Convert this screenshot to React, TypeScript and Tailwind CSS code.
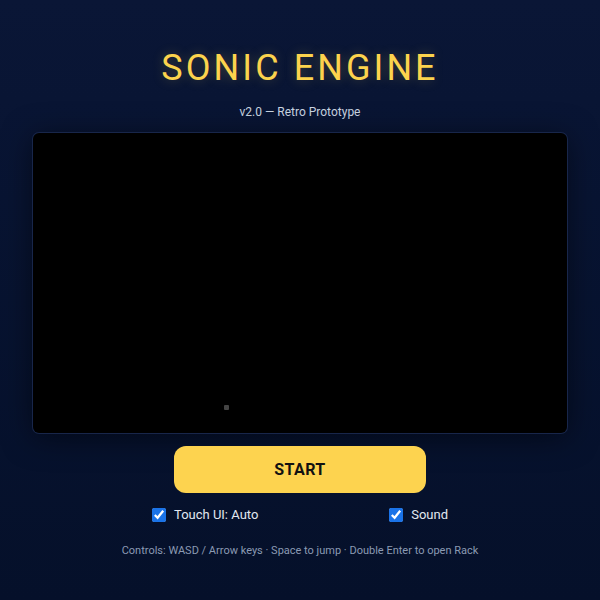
import { useState } from "react";

export default function App() {
  const [touch, setTouch] = useState(true);
  const [sound, setSound] = useState(true);

  return (
    <div className="min-h-screen bg-gradient-to-b from-[#0a1636] to-[#05102a] font-['Roboto','Liberation_Sans',sans-serif] text-slate-200">
      <div className="flex flex-col items-center px-[33px] pt-12">
        <h1 className="text-[36px] leading-10 font-normal tracking-[0.085em] text-[#fcd34d] [text-shadow:0_0_12px_rgba(252,211,77,0.25)]">
          SONIC ENGINE
        </h1>
        <p className="mt-4 text-[12px] leading-4 text-slate-300">v2.0 — Retro Prototype</p>

        <div className="relative mt-[13px] h-[300px] w-full rounded-md bg-black ring-1 ring-[#18264a] shadow-[0_4px_30px_rgba(0,0,0,0.5)]">
          <div className="absolute left-[191px] top-[272px] h-[5px] w-[5px] rounded-[1px] bg-[#444]" />
        </div>

        <button
          type="button"
          className="relative z-10 mt-[13px] h-[47px] w-[252px] rounded-xl bg-[#fdd34f] text-[16px] font-bold text-[#111] tracking-wide"
        >
          START
        </button>

        <div className="mt-3 flex w-[296px] items-center justify-between text-[13px] leading-5 text-slate-200">
          <label className="flex cursor-pointer items-center gap-2">
            <input
              type="checkbox"
              checked={touch}
              onChange={(e) => setTouch(e.target.checked)}
              className="h-[14px] w-[14px] accent-[#1a73e8]"
            />
            <span>Touch UI: Auto</span>
          </label>
          <label className="flex cursor-pointer items-center gap-2">
            <input
              type="checkbox"
              checked={sound}
              onChange={(e) => setSound(e.target.checked)}
              className="h-[14px] w-[14px] accent-[#1a73e8]"
            />
            <span>Sound</span>
          </label>
        </div>

        <p className="mt-[18px] text-[11px] leading-4 text-[#8b9ab3]">
          Controls: WASD / Arrow keys · Space to jump · Double Enter to open Rack
        </p>
      </div>
    </div>
  );
}
